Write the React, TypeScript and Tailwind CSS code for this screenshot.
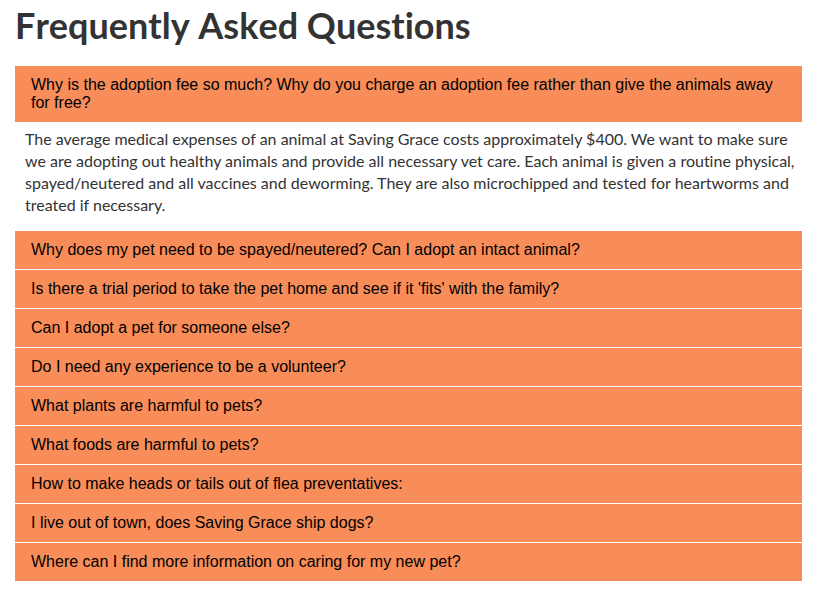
import { useState } from "react";

const items = [
  {
    q: "Why is the adoption fee so much? Why do you charge an adoption fee rather than give the animals away for free?",
    a: "The average medical expenses of an animal at Saving Grace costs approximately $400. We want to make sure we are adopting out healthy animals and provide all necessary vet care. Each animal is given a routine physical, spayed/neutered and all vaccines and deworming. They are also microchipped and tested for heartworms and treated if necessary.",
  },
  { q: "Why does my pet need to be spayed/neutered? Can I adopt an intact animal?" },
  { q: "Is there a trial period to take the pet home and see if it 'fits' with the family?" },
  { q: "Can I adopt a pet for someone else?" },
  { q: "Do I need any experience to be a volunteer?" },
  { q: "What plants are harmful to pets?" },
  { q: "What foods are harmful to pets?" },
  { q: "How to make heads or tails out of flea preventatives:" },
  { q: "I live out of town, does Saving Grace ship dogs?" },
  { q: "Where can I find more information on caring for my new pet?" },
];

export default function App() {
  const [open, setOpen] = useState(0);

  return (
    <main className="min-h-screen bg-white pt-[3px] pr-[13px] pb-2 pl-[15px] font-['Lato',sans-serif] text-[#333] [font-variant-ligatures:none]">
      <h1 className="text-[36px] leading-[44px] font-bold [font-kerning:none]">Frequently Asked Questions</h1>
      <div className="mt-[19px] flex flex-col gap-px">
        {items.map((item, i) => (
          <section key={item.q}>
            <h2>
              <button
                type="button"
                aria-expanded={open === i}
                onClick={() => setOpen(open === i ? -1 : i)}
                className="block w-full cursor-pointer bg-[#f88d59] px-4 py-[10px] text-left font-['Liberation_Sans',Arial,sans-serif] text-[16px] leading-[18px] text-black"
              >
                {item.q}
              </button>
            </h2>
            {open === i && item.a && (
              <p className="pt-[6px] pb-[14px] pl-[10px] text-[16px] leading-[22px]">{item.a}</p>
            )}
          </section>
        ))}
      </div>
    </main>
  );
}
